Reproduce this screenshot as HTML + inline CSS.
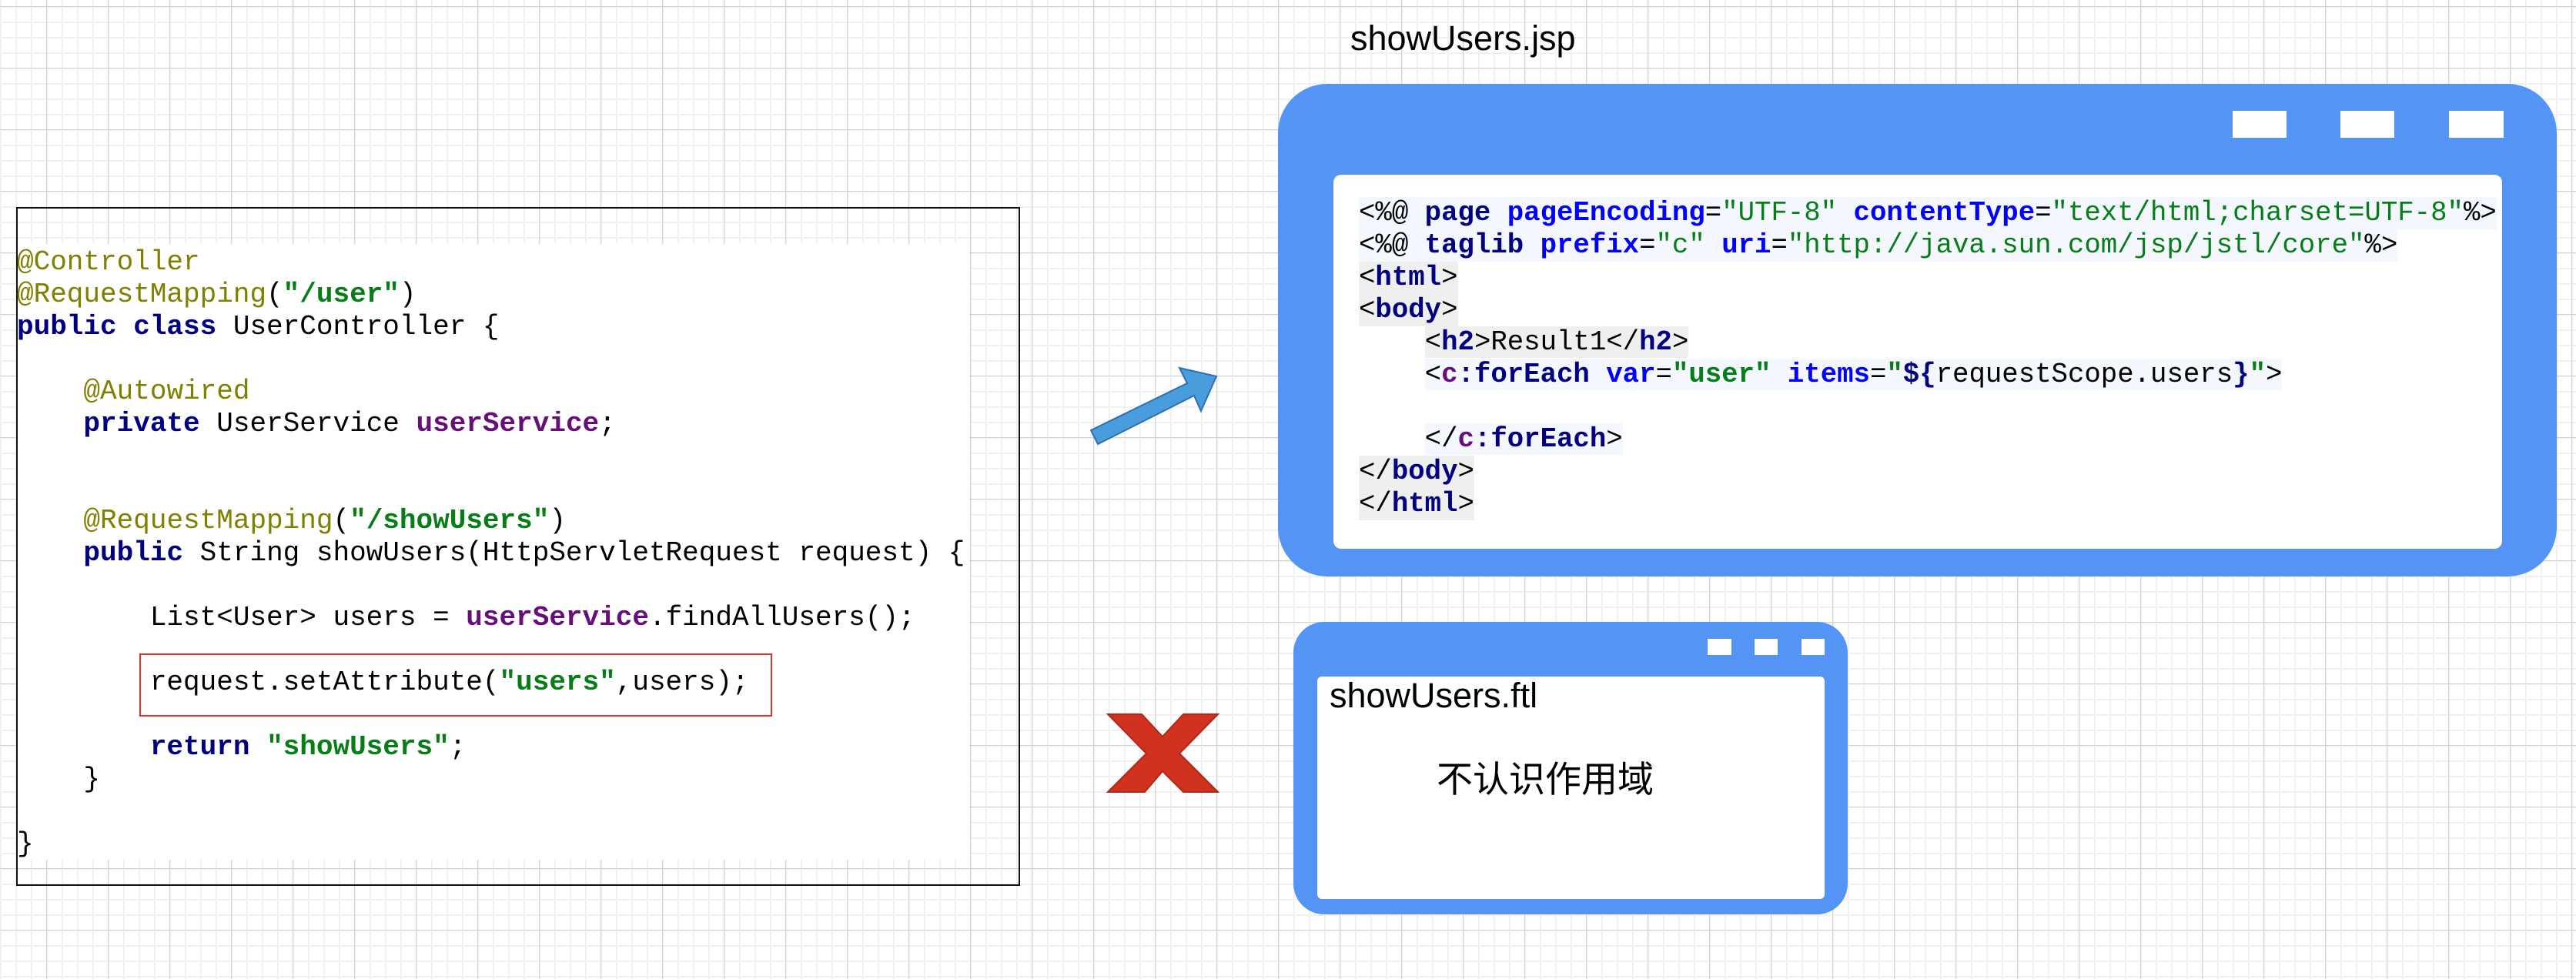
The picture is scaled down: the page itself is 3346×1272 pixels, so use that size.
<!DOCTYPE html>
<html><head><meta charset="utf-8"><style>
body{margin:0;width:3346px;height:1272px;overflow:hidden;position:relative;background-color:#fff;
background-image:
linear-gradient(to right,#d2d2d2 0 1px,transparent 1px),
linear-gradient(to bottom,#d2d2d2 0 1px,transparent 1px),
linear-gradient(to right,#f1f1f1 0 2px,transparent 2px),
linear-gradient(to bottom,#f1f1f1 0 2px,transparent 2px);
background-size:80px 80px,80px 80px,20px 20px,20px 20px;
background-position:60px 0,0 8px,0 0,0 8px;}
.abs{position:absolute}
.code{font-family:"Liberation Mono",monospace;white-space:pre;color:#000}
.a{color:#808000}.k{color:#000080;font-weight:bold}.s{color:#067d17;font-weight:bold}.f{color:#660e7a;font-weight:bold}
.at{color:#0000ff;font-weight:bold}.sv{color:#067d17}
.ln{position:absolute;left:0;height:42px;line-height:42px}
</style></head><body>

<div class="abs" style="left:21px;top:269px;width:1300px;height:878px;border:2px solid #111;"></div>
<div class="abs" style="left:23px;top:317px;width:1236px;height:800px;background:#fff;"></div>
<div class="abs code" style="left:22px;top:320px;font-size:36px;">
<div class="ln" style="top:0"><span class="a">@Controller</span></div>
<div class="ln" style="top:42px"><span class="a">@RequestMapping</span>(<span class="s">"/user"</span>)</div>
<div class="ln" style="top:84px"><span class="k">public class</span> UserController {</div>
<div class="ln" style="top:168px">    <span class="a">@Autowired</span></div>
<div class="ln" style="top:210px">    <span class="k">private</span> UserService <span class="f">userService</span>;</div>
<div class="ln" style="top:336px">    <span class="a">@RequestMapping</span>(<span class="s">"/showUsers"</span>)</div>
<div class="ln" style="top:378px">    <span class="k">public</span> String showUsers(HttpServletRequest request) {</div>
<div class="ln" style="top:462px">        List&lt;User&gt; users = <span class="f">userService</span>.findAllUsers();</div>
<div class="ln" style="top:546px">        request.setAttribute(<span class="s">"users"</span>,users);</div>
<div class="ln" style="top:630px">        <span class="k">return</span> <span class="s">"showUsers"</span>;</div>
<div class="ln" style="top:672px">    }</div>
<div class="ln" style="top:756px">}</div>
</div>
<div class="abs" style="left:181px;top:849px;width:818px;height:78px;border:2px solid #e0322a;"></div>

<svg class="abs" style="left:0;top:0" width="3346" height="1272">
<polygon points="1417,559 1542,498 1532,478 1580,489 1560,534 1551,514 1426,577" fill="#4a9ddc" stroke="#2f6fb0" stroke-width="2"/>
<polygon points="1439,928 1483,928 1510,957 1537,928 1582,928 1532,979 1582,1029 1537,1029 1510,1002 1487,1029 1439,1029 1489,979" fill="#d0321f" stroke="#b0281a" stroke-width="2"/>
</svg>

<div class="abs" style="left:1754px;top:24px;font:45px 'Liberation Sans',sans-serif;color:#000;">showUsers.jsp</div>
<div class="abs" style="left:1660px;top:109px;width:1661px;height:640px;background:#5394f5;border-radius:64px;"></div>
<div class="abs" style="left:1732px;top:227px;width:1518px;height:486px;background:#fff;border-radius:10px;"></div>
<div class="abs" style="left:2900px;top:144px;width:70px;height:35px;background:#fff"></div>
<div class="abs" style="left:3040px;top:144px;width:70px;height:35px;background:#fff"></div>
<div class="abs" style="left:3181px;top:144px;width:71px;height:35px;background:#fff"></div>
<div class="abs code" style="left:1765px;top:256px;font-size:35.7px;">
<div class="ln" style="top:0;background:#f5f7ff"><span>&lt;%@ </span><span class="k">page</span> <span class="at">pageEncoding</span>=<span class="sv">"UTF-8"</span> <span class="at">contentType</span>=<span class="sv">"text/html;charset=UTF-8"</span>%&gt;</div>
<div class="ln" style="top:42px;background:#f5f7ff">&lt;%@ <span class="k">taglib</span> <span class="at">prefix</span>=<span class="sv">"c"</span> <span class="at">uri</span>=<span class="sv">"http://java.sun.com/jsp/jstl/core"</span>%&gt;</div>
<div class="ln" style="top:84px;background:#efefef">&lt;<span class="k">html</span>&gt;</div>
<div class="ln" style="top:126px;background:#efefef">&lt;<span class="k">body</span>&gt;</div>
<div class="ln" style="top:168px">    <span style="background:#efefef">&lt;<span class="k">h2</span>&gt;Result1&lt;/<span class="k">h2</span>&gt;</span></div>
<div class="ln" style="top:210px">    <span style="background:#f5f7ff">&lt;<span class="f">c</span><span class="k">:forEach</span> <span class="at">var</span>=<span class="s">"user"</span> <span class="at">items</span>=<span class="s">"</span><span class="k">${</span>requestScope.users<span class="k">}</span><span class="s">"</span>&gt;</span></div>
<div class="ln" style="top:294px">    <span style="background:#f5f7ff">&lt;/<span class="f">c</span><span class="k">:forEach</span>&gt;</span></div>
<div class="ln" style="top:336px;background:#efefef">&lt;/<span class="k">body</span>&gt;</div>
<div class="ln" style="top:378px;background:#efefef">&lt;/<span class="k">html</span>&gt;</div>
</div>

<div class="abs" style="left:1680px;top:808px;width:720px;height:380px;background:#5394f5;border-radius:40px;"></div>
<div class="abs" style="left:1711px;top:879px;width:659px;height:289px;background:#fff;border-radius:6px;"></div>
<div class="abs" style="left:2218px;top:830px;width:31px;height:21px;background:#fff"></div>
<div class="abs" style="left:2279px;top:830px;width:30px;height:21px;background:#fff"></div>
<div class="abs" style="left:2340px;top:830px;width:30px;height:21px;background:#fff"></div>
<div class="abs" style="left:1727px;top:878px;font:45px 'Liberation Sans',sans-serif;color:#000;">showUsers.ftl</div>
<div class="abs" style="left:1866px;top:983px;font:47px 'Liberation Sans','Noto Sans CJK SC',sans-serif;color:#000;line-height:60px;">不认识作用域</div>
</body></html>
